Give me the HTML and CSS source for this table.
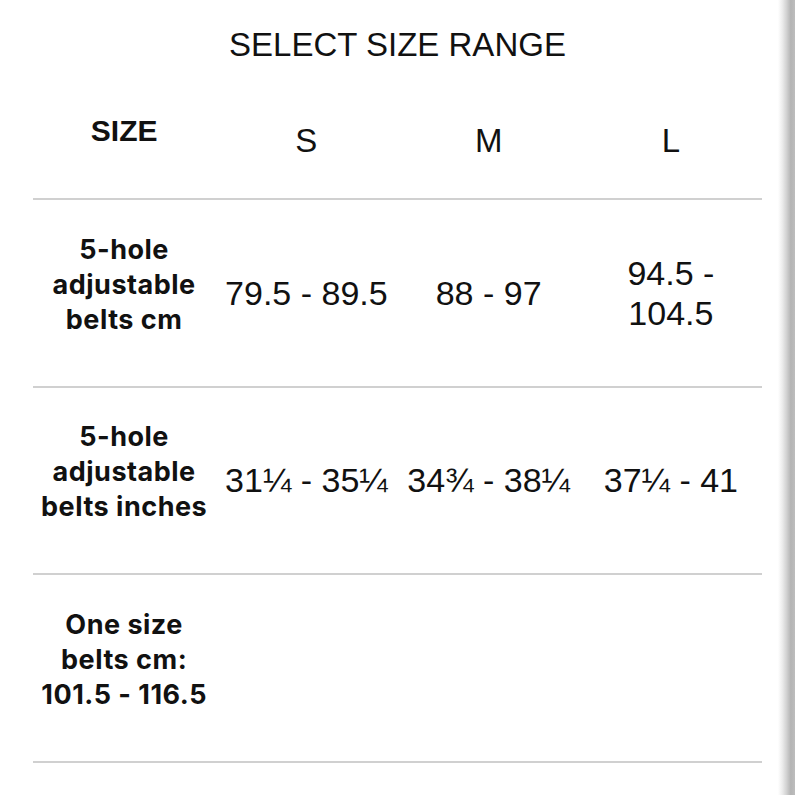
FILE: index.html
```html
<!DOCTYPE html>
<html>
<head>
<meta charset="utf-8">
<link rel="stylesheet" href="styles.css">
</head>
<body>
<div class="page">
  <h1 class="title">SELECT SIZE RANGE</h1>
  <div class="table">
    <div class="row head">
      <div class="cell size">SIZE</div>
      <div class="cell col">S</div>
      <div class="cell col">M</div>
      <div class="cell col">L</div>
    </div>
    <div class="row">
      <div class="cell label">5-hole<br>adjustable<br>belts cm</div>
      <div class="cell val">79.5 - 89.5</div>
      <div class="cell val">88 - 97</div>
      <div class="cell val">94.5 -<br>104.5</div>
    </div>
    <div class="row">
      <div class="cell label">5-hole<br>adjustable<br>belts inches</div>
      <div class="cell val">31¼ - 35¼</div>
      <div class="cell val">34¾ - 38¼</div>
      <div class="cell val">37¼ - 41</div>
    </div>
    <div class="row last">
      <div class="cell label">One size<br>belts cm:<br>101.5 - 116.5</div>
      <div class="cell val"></div>
      <div class="cell val"></div>
      <div class="cell val"></div>
    </div>
  </div>
  <div class="edge"></div>
</div>
</body>
</html>
```

FILE: styles.css
```css
html, body {
  margin: 0;
  padding: 0;
  background: #fff;
}
.page {
  position: relative;
  width: 795px;
  height: 795px;
  overflow: hidden;
  color: #111;
  font-family: "Liberation Sans", Arial, sans-serif;
}
.title {
  margin: 0;
  padding-top: 26px;
  font-size: 33px;
  line-height: 38px;
  font-weight: 400;
  text-align: center;
}
.table {
  margin: 0 33px;
}
.row {
  display: grid;
  grid-template-columns: repeat(4, 1fr);
  align-items: center;
  height: 185.5px;
  border-top: 2px solid #d0d0d0;
}
.row.last {
  border-bottom: 2px solid #d0d0d0;
}
.row.head {
  height: 134px;
  border-top: none;
}
.cell {
  text-align: center;
}
.size {
  font-weight: 700;
  font-size: 30px;
  line-height: 38px;
}
.col {
  font-size: 33px;
  line-height: 38px;
  margin-top: 20px;
}
.label {
  font-family: Inter, "Liberation Sans", sans-serif;
  font-weight: 700;
  font-size: 27px;
  line-height: 35px;
  letter-spacing: 0.5px;
  padding-bottom: 17px;
}
.val {
  font-size: 34px;
  line-height: 40px;
  white-space: nowrap;
}
.edge {
  position: absolute;
  top: 0;
  right: 0;
  width: 17px;
  height: 100%;
  background: linear-gradient(to right, #ffffff 0%, #ececec 25%, #d2d2d2 50%, #b4b4b4 75%, #bdbdbd 100%);
}
```
